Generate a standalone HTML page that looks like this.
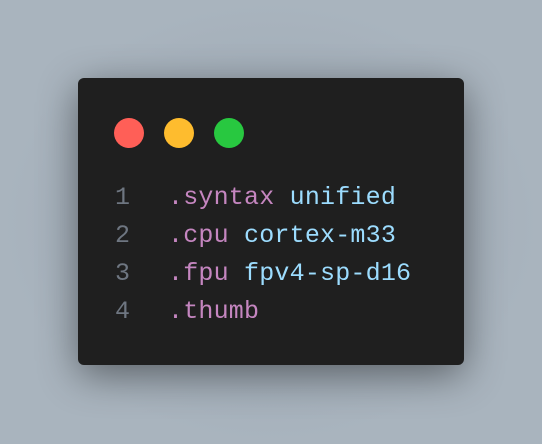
<!DOCTYPE html>
<html><head><style>
body{margin:0;width:542px;height:444px;background:radial-gradient(ellipse at center,#9aa5b1 0%,#a9b4be 70%);overflow:hidden;position:relative}
.card{position:absolute;left:78px;top:78px;width:386px;height:287px;background:#1f1f1f;border-radius:6px;box-shadow:0 10px 40px rgba(0,0,0,0.45)}
.dot{position:absolute;top:40px;width:30px;height:30px;border-radius:50%}
.code{position:absolute;top:101px;font-family:"Liberation Mono",monospace;font-size:25px;line-height:38px;white-space:pre;letter-spacing:0.2px}
.n{color:#6e7681}.k{color:#c586c0}.v{color:#9cdcfe}
</style></head><body>
<div class="card">
<div class="dot" style="left:36px;background:#ff5f57"></div>
<div class="dot" style="left:86px;background:#febc2e"></div>
<div class="dot" style="left:136px;background:#28c840"></div>
<div class="code n" style="left:37px">1
2
3
4</div>
<div class="code" style="left:90px"><span class="k">.syntax</span> <span class="v">unified</span>
<span class="k">.cpu</span> <span class="v">cortex-m33</span>
<span class="k">.fpu</span> <span class="v">fpv4-sp-d16</span>
<span class="k">.thumb</span></div>
</div>
</body></html>
